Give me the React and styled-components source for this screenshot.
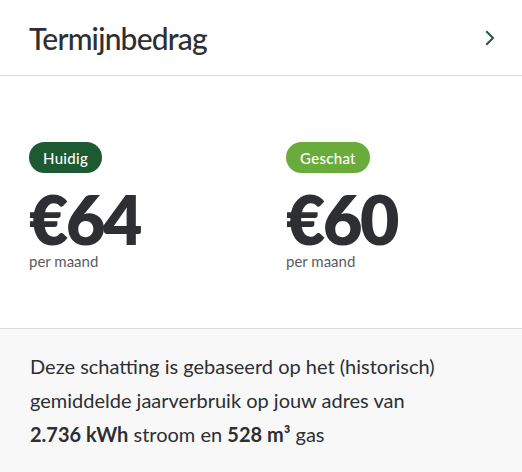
import React from "react";
import styled, { createGlobalStyle } from "styled-components";

const Global = createGlobalStyle`
  html, body { margin: 0; padding: 0; background: #fff; }
  body { font-family: Lato, "Open Sans", sans-serif; color: #2d2f33; }
`;

const Card = styled.div`
  width: 522px;
  height: 472px;
  background: #fff;
  display: flex;
  flex-direction: column;
  overflow: hidden;
`;

const Header = styled.div`
  height: 76px;
  box-sizing: border-box;
  display: flex;
  align-items: center;
  justify-content: space-between;
  padding: 0 27px 0 29px;
  border-bottom: 1px solid #dcdcdc;
`;

const Title = styled.h2`
  margin: 0;
  font-size: 30px;
  font-weight: 500;
  letter-spacing: -0.8px;
  color: #2d2f33;
`;

const Body = styled.div`
  flex: 0 0 253px;
  box-sizing: border-box;
  display: grid;
  grid-template-columns: 257px 1fr;
  padding: 66px 29px 0;
  border-bottom: 1px solid #dcdcdc;
`;

const Column = styled.div`
  display: flex;
  flex-direction: column;
  align-items: flex-start;
`;

const Badge = styled.span`
  display: inline-flex;
  align-items: center;
  height: 31px;
  padding: 0 14px;
  border-radius: 16px;
  background: ${(p) => p.$bg};
  color: #fff;
  font-size: 15px;
  font-weight: 500;
  letter-spacing: 0.3px;
`;

const Amount = styled.div`
  margin-top: 15px;
  font-size: 68px;
  font-weight: 800;
  line-height: 62px;
  letter-spacing: -2.5px;
  color: #2d2f33;
`;

const Per = styled.div`
  margin-top: 2px;
  font-size: 15px;
  color: #5a5c60;
  line-height: 18px;
`;

const Footer = styled.div`
  flex: 1;
  background: #f8f8f8;
  padding: 20px 29px 0 30px;
  font-size: 20px;
  line-height: 34px;
  color: #2d2f33;
`;

const Strong = styled.strong`
  font-weight: 700;
  white-space: nowrap;
`;

const Chevron = () => (
  <svg width="10" height="16" viewBox="0 0 10 16" fill="none">
    <path d="M2 2l6 6-6 6" stroke="#1e5a3a" strokeWidth="2" strokeLinecap="square" />
  </svg>
);

export default function App() {
  return (
    <>
      <Global />
      <Card>
        <Header>
          <Title>Termijnbedrag</Title>
          <Chevron />
        </Header>
        <Body>
          <Column>
            <Badge $bg="#1d5a32">Huidig</Badge>
            <Amount>€64</Amount>
            <Per>per maand</Per>
          </Column>
          <Column>
            <Badge $bg="#6aac3c">Geschat</Badge>
            <Amount>€60</Amount>
            <Per>per maand</Per>
          </Column>
        </Body>
        <Footer>
          Deze schatting is gebaseerd op het (historisch) gemiddelde jaarverbruik op jouw adres van{" "}
          <Strong>2.736 kWh</Strong> stroom en <Strong>528 m³</Strong> gas
        </Footer>
      </Card>
    </>
  );
}
